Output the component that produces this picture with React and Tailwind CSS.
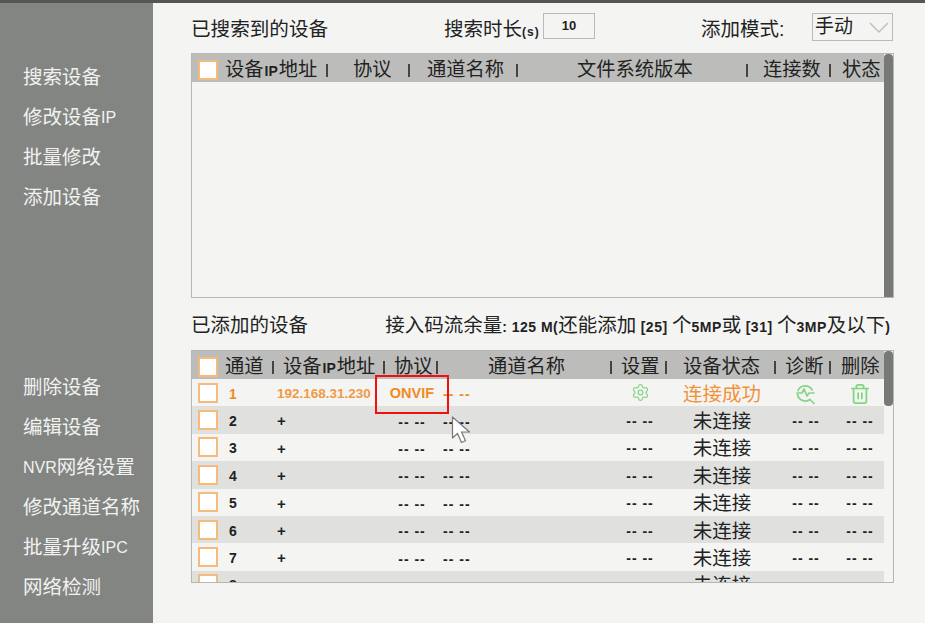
import { Settings, Trash2 } from "lucide-react";

const CJK = "font-['Liberation_Sans','Noto_Sans_CJK_SC',sans-serif]";

const sideTop = ["搜索设备", "修改设备IP", "批量修改", "添加设备"];
const sideBottom = ["删除设备", "编辑设备", "NVR网络设置", "修改通道名称", "批量升级IPC", "网络检测"];

// width of each header cell, left padding, label
const searchCols = [
  [101, "pl-0", "ip"],
  [80, "pl-[25px]", "协议"],
  [106, "pl-[17px]", "通道名称"],
  [228, "pl-[59px]", "文件系统版本"],
  [81, "pl-[15px]", "连接数"],
  [53, "pl-[11px]", "状态"],
];
const addedCols = [
  [47, "pl-0", "通道"],
  [109, "pl-[9px]", "ip"],
  [51, "pl-[9px]", "协议"],
  [172, "pl-[50px]", "通道名称"],
  [53, "pl-[9px]", "设置"],
  [107, "pl-[16px]", "设备状态"],
  [53, "pl-[9px]", "诊断"],
  [53, "pl-[10px]", "删除"],
];

const rows = [1, 2, 3, 4, 5, 6, 7, 8];

function SideItem({ text }) {
  // latin parts are a bit smaller than the chinese ones
  const parts = text.split(/([A-Z]+)/);
  return (
    <div className="h-10 flex items-center pl-[23px] text-[19.5px] text-[#f1f2f0] whitespace-nowrap">
      {parts.map((p, i) =>
        /[A-Z]/.test(p) ? (
          <span key={i} className="text-[16px]">{p}</span>
        ) : (
          <span key={i}>{p}</span>
        )
      )}
    </div>
  );
}

function Check() {
  return <div className="w-5 h-5 bg-white border-2 border-[#f6bb7c] shrink-0" />;
}

function HeaderRow({ cols }) {
  return (
    <div className="h-[28px] bg-[#bcbdbb] flex items-center pt-[4px] text-[19.3px] text-[#222] whitespace-nowrap">
      <div className="w-[33px] pl-[6px] shrink-0"><Check /></div>
      {cols.map(([w, pl, label], i) => (
        <div key={i} className="flex items-center shrink-0">
          <div style={{ width: w }} className={pl}>
            {label === "ip" ? (
              <span>设备<span className="text-[14px] font-bold mx-[1px]">IP</span>地址</span>
            ) : (
              label
            )}
          </div>
          {i < cols.length - 1 && <div className="w-[2px] h-[13px] bg-[#444]" />}
        </div>
      ))}
    </div>
  );
}

function Dashes({ orange }) {
  return <span className={`text-[14px] font-bold tracking-[1px] ${orange ? "text-[#f08a24]" : "text-[#222]"}`}>-- --</span>;
}

function DiagIcon() {
  return (
    <svg width="22" height="22" viewBox="0 0 22 22" fill="none" stroke="#86d486" strokeWidth="1.7" strokeLinecap="round" strokeLinejoin="round">
      <path d="M3 7.5A8 8 0 0 1 17.2 7" />
      <path d="M2.5 11.5A8 8 0 0 0 15 16.5" />
      <path d="M15 16.5l4 4" />
      <path d="M2 10h5l2-4 3 7 2-3h5" />
    </svg>
  );
}

function DeviceRow({ n }) {
  const first = n === 1;
  return (
    <div className={`h-[27.4px] flex items-center shrink-0 ${n % 2 === 0 ? "bg-[#e0e1df]" : "bg-[#f4f5f3]"}`}>
      <div className="w-[30px] pl-[6px] shrink-0"><Check /></div>
      <div className="flex items-center pt-[3px]">
        <div className={`w-[22px] text-center text-[14px] font-bold ${first ? "text-[#f08a24]" : "text-[#222]"}`}>{n}</div>
        <div className={`w-[137px] pl-[33px] font-bold whitespace-nowrap shrink-0 ${first ? "text-[13.5px] text-[#f09a45]" : "text-[15px] text-[#222]"}`}>
          {first ? "192.168.31.230" : "+"}
        </div>
        <div className={`w-[62px] text-center shrink-0 ${first ? "text-[14.500px] font-bold text-[#f08a24]" : ""}`}>
          {first ? "ONVIF" : <Dashes />}
        </div>
        <div className="w-[177px] shrink-0">
          <Dashes orange={first} />
        </div>
        <div className="w-[40px] flex justify-center shrink-0">
          {first ? <Settings size={19} color="#8ad38a" strokeWidth={1.6} className="-mt-[3px]" /> : <Dashes />}
        </div>
      </div>
      <div className={`w-[124px] pt-[3px] text-center text-[19.5px] whitespace-nowrap shrink-0 ${first ? "text-[#f0923a]" : "text-[#222]"}`}>
        {first ? "连接成功" : "未连接"}
      </div>
      <div className="w-[44px] flex justify-center shrink-0 pt-[3px]">
        {first ? <DiagIcon /> : <Dashes />}
      </div>
      <div className="w-[48px] ml-2 flex justify-center shrink-0 pt-[3px]">
        {first ? <Trash2 size={22} color="#7fd67f" strokeWidth={1.9} /> : <Dashes />}
      </div>
    </div>
  );
}

export default function App() {
  return (
    <div className={`relative w-[925px] h-[623px] overflow-hidden flex flex-col bg-[#f4f5f3] ${CJK}`}>
      <div className="h-[3px] bg-[#555755] shrink-0" />
      <div className="flex-1 flex min-h-0">
        <aside className="w-[153px] bg-[#838583] pt-[55px] shrink-0">
          {sideTop.map((t) => <SideItem key={t} text={t} />)}
          <div className="h-[150px]" />
          {sideBottom.map((t) => <SideItem key={t} text={t} />)}
        </aside>

        <main className="flex-1 pl-[38px] pr-[32px] flex flex-col text-[#222]">
          <div className="h-[50px] flex items-center whitespace-nowrap shrink-0">
            <div className="w-[253px] pt-[4px] text-[19.6px]">已搜索到的设备</div>
            <div className="w-[99px] pt-[4px] text-[19.5px]">搜索时长<span className="text-[12px] font-bold tracking-[1px]">(s)</span></div>
            <div className="w-[52px] h-[26px] mb-[4px] border border-[#b9bbb9] flex items-center justify-center text-[13px] font-bold">10</div>
            <div className="ml-[106px] w-[111px] pt-[4px] text-[19.5px]">添加模式:</div>
            <div className="w-[81px] h-[28px] mb-[2px] border border-[#b9bbb9] flex items-center justify-between pl-[2px] pr-[2px] text-[19px]">
              手动
              <svg width="22" height="12" viewBox="0 0 22 12" fill="none" stroke="#bcbebc" strokeWidth="1.4"><path d="M2 2l9 9 9-9" /></svg>
            </div>
          </div>

          <div className="h-[245px] border border-[#b5b7b5] flex shrink-0">
            <div className="w-[692px] h-full"><HeaderRow cols={searchCols} /></div>
            <div className="w-[9px] h-full bg-[#777977] rounded-t-[4px]" />
          </div>

          <div className="h-[52px] pt-[4px] flex items-center justify-between whitespace-nowrap shrink-0">
            <div className="text-[19.5px]">已添加的设备</div>
            <div className="text-[19.5px] pr-[4px]">
              接入码流余量<span className="text-[14px] font-bold tracking-[0.5px]">: 125 M(</span>还能添加
              <span className="text-[14px] font-bold tracking-[0.5px]"> [25] </span>个<span className="text-[14px] font-bold tracking-[0.5px]">5MP</span>或
              <span className="text-[14px] font-bold tracking-[0.5px]"> [31] </span>个<span className="text-[14px] font-bold tracking-[0.5px]">3MP</span>及以下<span className="text-[14px] font-bold">)</span>
            </div>
          </div>

          <div className="h-[233px] border border-[#b5b7b5] flex overflow-hidden shrink-0">
            <div className="w-[692px] h-full flex flex-col overflow-hidden">
              <HeaderRow cols={addedCols} />
              {rows.map((n) => <DeviceRow key={n} n={n} />)}
            </div>
            <div className="w-[9px] h-[55px] bg-[#777977] rounded-[4px]" />
          </div>
        </main>
      </div>

      {/* red highlight drawn over the table */}
      <div className="absolute left-[375px] top-[375px] w-[74px] h-[39px] border-2 border-[#f01010]" />

      {/* mouse pointer */}
      <svg className="absolute left-[451px] top-[416px]" width="22" height="29" viewBox="0 0 22 29">
        <path d="M1.500 1v21l5-4.500 4 9 4-1.800-4-8.700h8z" fill="#fff" stroke="#777" strokeWidth="1.200" strokeLinejoin="round" />
      </svg>
    </div>
  );
}
